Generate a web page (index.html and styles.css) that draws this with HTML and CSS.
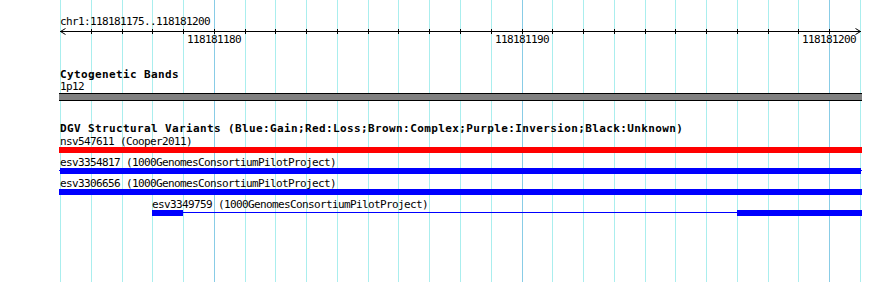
FILE: index.html
```html
<!DOCTYPE html>
<html>
<head>
<meta charset="utf-8">
<link rel="stylesheet" href="styles.css">
</head>
<body>
<div class="view">
  <div class="grid">
    <div class="gl" style="left:60px"></div>
    <div class="gl" style="left:91px"></div>
    <div class="gl" style="left:122px"></div>
    <div class="gl" style="left:152px"></div>
    <div class="gl" style="left:183px"></div>
    <div class="gl major" style="left:214px"></div>
    <div class="gl" style="left:245px"></div>
    <div class="gl" style="left:275px"></div>
    <div class="gl" style="left:306px"></div>
    <div class="gl" style="left:337px"></div>
    <div class="gl" style="left:368px"></div>
    <div class="gl" style="left:398px"></div>
    <div class="gl" style="left:429px"></div>
    <div class="gl" style="left:460px"></div>
    <div class="gl" style="left:491px"></div>
    <div class="gl major" style="left:522px"></div>
    <div class="gl" style="left:552px"></div>
    <div class="gl" style="left:583px"></div>
    <div class="gl" style="left:614px"></div>
    <div class="gl" style="left:645px"></div>
    <div class="gl" style="left:675px"></div>
    <div class="gl" style="left:706px"></div>
    <div class="gl" style="left:737px"></div>
    <div class="gl" style="left:768px"></div>
    <div class="gl" style="left:798px"></div>
    <div class="gl major" style="left:829px"></div>
    <div class="gl" style="left:860px"></div>
  </div>

  <div class="content">
    <div class="ruler-title">chr1:118181175..118181200</div>
    <svg class="axis" width="890" height="8" viewBox="0 0 890 8">
      <rect x="60" y="4" width="801" height="1" fill="#000"/>
      <g fill="#000">
        <rect x="91" y="2" width="1" height="5"/>
        <rect x="122" y="2" width="1" height="5"/>
        <rect x="152" y="2" width="1" height="5"/>
        <rect x="183" y="2" width="1" height="5"/>
        <rect x="214" y="2" width="1" height="5"/>
        <rect x="245" y="2" width="1" height="5"/>
        <rect x="275" y="2" width="1" height="5"/>
        <rect x="306" y="2" width="1" height="5"/>
        <rect x="337" y="2" width="1" height="5"/>
        <rect x="368" y="2" width="1" height="5"/>
        <rect x="398" y="2" width="1" height="5"/>
        <rect x="429" y="2" width="1" height="5"/>
        <rect x="460" y="2" width="1" height="5"/>
        <rect x="491" y="2" width="1" height="5"/>
        <rect x="522" y="2" width="1" height="5"/>
        <rect x="552" y="2" width="1" height="5"/>
        <rect x="583" y="2" width="1" height="5"/>
        <rect x="614" y="2" width="1" height="5"/>
        <rect x="645" y="2" width="1" height="5"/>
        <rect x="675" y="2" width="1" height="5"/>
        <rect x="706" y="2" width="1" height="5"/>
        <rect x="737" y="2" width="1" height="5"/>
        <rect x="768" y="2" width="1" height="5"/>
        <rect x="798" y="2" width="1" height="5"/>
        <rect x="829" y="2" width="1" height="5"/>
      </g>
      <path d="M65.5 1.5 L60.5 4.5 L65.5 7.5" fill="none" stroke="#000" stroke-width="1"/>
      <path d="M855.5 1.5 L860.5 4.5 L855.5 7.5" fill="none" stroke="#000" stroke-width="1"/>
    </svg>
    <div class="tick-labels">
      <span class="tick-label" style="left:214px">118181180</span>
      <span class="tick-label" style="left:522px">118181190</span>
      <span class="tick-label" style="left:829px">118181200</span>
    </div>

    <div class="track-title band-title">Cytogenetic Bands</div>
    <div class="band-label">1p12</div>
    <div class="band-bar"></div>

    <div class="track-title dgv-title">DGV Structural Variants (Blue:Gain;Red:Loss;Brown:Complex;Purple:Inversion;Black:Unknown)</div>

    <div class="feature first" style="margin-left:59px;width:803px">
      <div class="feature-label indent">nsv547611 (Cooper2011)</div>
      <div class="glyph"><div class="seg loss" style="width:803px"></div></div>
    </div>
    <div class="feature" style="margin-left:59px;width:803px">
      <div class="feature-label indent">esv3354817 (1000GenomesConsortiumPilotProject)</div>
      <div class="glyph connector"><div class="seg gain" style="margin-left:1px;width:801px"></div></div>
    </div>
    <div class="feature" style="margin-left:59px;width:803px">
      <div class="feature-label indent">esv3306656 (1000GenomesConsortiumPilotProject)</div>
      <div class="glyph"><div class="seg gain" style="width:803px"></div></div>
    </div>
    <div class="feature" style="margin-left:152px;width:710px">
      <div class="feature-label">esv3349759 (1000GenomesConsortiumPilotProject)</div>
      <div class="glyph connector">
        <div class="seg gain" style="width:31px"></div>
        <div class="seg gain" style="margin-left:554px;width:125px"></div>
      </div>
    </div>
  </div>
</div>
</body>
</html>
```

FILE: styles.css
```css
html, body {
  margin: 0;
  padding: 0;
  background: #ffffff;
}

body {
  font-family: "DejaVu Sans Mono", "Liberation Mono", monospace;
  font-size: 11px;
  letter-spacing: -0.62px;
  color: #000;
}

.view {
  position: relative;
  width: 890px;
  height: 282px;
  overflow: hidden;
}

.grid {
  position: absolute;
  top: 0;
  left: 0;
  width: 890px;
  height: 282px;
  z-index: 0;
}

.gl {
  position: absolute;
  top: 0;
  width: 1px;
  height: 282px;
  background: #aaeeee;
}

.gl.major {
  background: #88cce6;
}

.content {
  position: relative;
  z-index: 1;
}

.ruler-title {
  margin-top: 17px;
  height: 10px;
  line-height: 10px;
  padding-left: 60px;
  white-space: nowrap;
}

.axis {
  display: block;
  overflow: visible;
}

.tick-labels {
  position: relative;
  height: 10px;
  line-height: 10px;
}

.tick-label {
  position: absolute;
  top: 0;
  transform: translateX(-50%);
  white-space: nowrap;
}

.track-title {
  height: 11px;
  line-height: 11px;
  font-size: 11px;
  font-weight: bold;
  letter-spacing: 0.38px;
  padding-left: 60px;
  white-space: nowrap;
}

.band-title {
  margin-top: 24px;
}

.band-label {
  margin-top: 2px;
  height: 10px;
  line-height: 10px;
  padding-left: 60px;
}

.band-bar {
  margin-top: 1px;
  margin-left: 59px;
  width: 803px;
  height: 8px;
  box-sizing: border-box;
  border-top: 1px solid #000;
  border-bottom: 1px solid #000;
  background: #808080;
}

.dgv-title {
  margin-top: 22px;
}

.feature {
  margin-bottom: 5px;
}

.feature.first {
  margin-top: 3px;
}

.feature-label {
  height: 10px;
  line-height: 10px;
  white-space: nowrap;
}

.feature-label.indent {
  padding-left: 1px;
}

.glyph {
  display: flex;
  height: 6px;
}

.glyph.connector {
  background: linear-gradient(#0000ff, #0000ff) no-repeat 0 2px / 100% 1px;
}

.seg {
  height: 6px;
  flex: none;
}

.seg.gain {
  background: #0000ff;
}

.seg.loss {
  background: #ff0000;
}
```
